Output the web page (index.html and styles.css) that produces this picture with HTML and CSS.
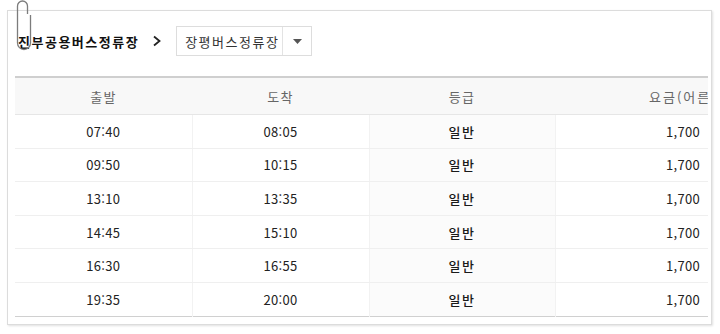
FILE: index.html
```html
<!DOCTYPE html>
<html lang="ko">
<head>
<meta charset="utf-8">
<title>시간표</title>
<link rel="stylesheet" href="styles.css">
</head>
<body>
<div class="frame">
  <svg class="clip" width="20" height="52" viewBox="0 0 20 52">
    <path d="M14.5 14 V6 A5 5 0 0 0 4.5 6 V43 A6.5 6.5 0 0 0 17.5 43 V15" fill="none" stroke="#7c7c7c" stroke-width="1.3"/>
  </svg>
  <div class="shot">
    <div class="route">
      <span class="from">진부공용버스정류장</span>
      <svg class="chev" width="10" height="12" viewBox="0 0 10 12"><polyline points="2,1.5 7.5,6 2,10.5" fill="none" stroke="#222" stroke-width="1.8"/></svg>
      <div class="select">
        <span class="sel-text">장평버스정류장</span>
        <span class="sel-btn"><svg width="9" height="5" viewBox="0 0 9 5"><polygon points="0,0 9,0 4.5,5" fill="#555"/></svg></span>
      </div>
    </div>
    <div class="tablewrap">
      <table class="tt">
        <colgroup><col class="c1"><col class="c2"><col class="c3"><col class="c4"></colgroup>
        <thead>
          <tr><th>출발</th><th>도착</th><th>등급</th><th class="fare">요금(어른)</th></tr>
        </thead>
        <tbody>
          <tr><td>07:40</td><td>08:05</td><td class="grade">일반</td><td class="fare">1,700</td></tr>
          <tr><td>09:50</td><td>10:15</td><td class="grade">일반</td><td class="fare">1,700</td></tr>
          <tr><td>13:10</td><td>13:35</td><td class="grade">일반</td><td class="fare">1,700</td></tr>
          <tr><td>14:45</td><td>15:10</td><td class="grade">일반</td><td class="fare">1,700</td></tr>
          <tr><td>16:30</td><td>16:55</td><td class="grade">일반</td><td class="fare">1,700</td></tr>
          <tr><td>19:35</td><td>20:00</td><td class="grade">일반</td><td class="fare">1,700</td></tr>
        </tbody>
      </table>
    </div>
  </div>
</div>
</body>
</html>
```
FILE: styles.css
```css
html, body {
  margin: 0;
  padding: 0;
  background: #fff;
}
body {
  font-family: "Noto Sans CJK KR", "Noto Sans", sans-serif;
  width: 720px;
  height: 334px;
  overflow: hidden;
}
.frame {
  position: relative;
  margin: 10px 0 0 7px;
  width: 703px;
  height: 313px;
  border: 1px solid #dcdcdc;
  background: #fff;
  box-shadow: 1px 1px 2px rgba(0,0,0,0.12);
}
.frame::before {
  content: "";
  position: absolute;
  left: 4px;
  right: -4px;
  top: 6px;
  bottom: -4px;
  border: 1px solid #dedede;
  background: #fff;
  transform: rotate(0.35deg);
  z-index: -1;
  box-shadow: 1px 1px 2px rgba(0,0,0,0.08);
}
.clip {
  position: absolute;
  left: 5px;
  top: -11px;
  z-index: 2;
}
.shot {
  padding-left: 7px;
  width: 693px;
  overflow: hidden;
}
.route {
  display: flex;
  align-items: center;
  height: 30px;
  margin-top: 15px;
  padding-left: 3px;
}
.from {
  font-size: 13px;
  font-weight: 700;
  color: #111;
  letter-spacing: 1.5px;
  white-space: nowrap;
}
.chev {
  margin-left: 13px;
  margin-right: 14px;
  flex: none;
}
.select {
  display: flex;
  align-items: stretch;
  height: 28px;
  border: 1px solid #dddddd;
  width: 134px;
  flex: none;
}
.sel-text {
  display: flex;
  align-items: center;
  box-sizing: border-box;
  width: 106px;
  padding-left: 8px;
  font-size: 13px;
  color: #333;
  letter-spacing: 1.5px;
  white-space: nowrap;
  border-right: 1px solid #e3e3e3;
}
.sel-btn {
  flex: 1;
  display: flex;
  align-items: center;
  justify-content: center;
}
.tablewrap {
  margin-top: 20px;
  width: 693px;
  overflow: hidden;
}
.tt {
  border-collapse: collapse;
  table-layout: fixed;
  width: 693px;
  border-top: 2px solid #cfcfcf;
  border-bottom: 1px solid #d0d0d0;
}
.c1 { width: 177px; }
.c2 { width: 177px; }
.c3 { width: 186px; }
.c4 { width: 153px; }
.tt th {
  height: 36px;
  padding: 0;
  background: #f8f8f8;
  font-weight: 400;
  font-size: 13px;
  color: #666;
  letter-spacing: 1.2px;
  border-bottom: 1px solid #e6e6e6;
  text-align: center;
  white-space: nowrap;
  overflow: hidden;
}
.tt th.fare {
  text-align: left;
  padding-left: 94px;
  letter-spacing: 2px;
}
.tt td {
  height: 32.6px;
  padding: 0;
  font-size: 13px;
  color: #222;
  text-align: center;
  letter-spacing: 0.3px;
  border-bottom: 1px solid #efefef;
  border-left: 1px solid #f2f2f2;
}
.tt td:first-child {
  border-left: none;
}
.tt tbody tr:last-child td {
  border-bottom: none;
}
.tt td.grade {
  background: #fbfbfb;
  font-weight: 500;
  letter-spacing: 1.6px;
  color: #1a1a1a;
}
.tt td.fare {
  text-align: right;
  padding-right: 8px;
}
```
